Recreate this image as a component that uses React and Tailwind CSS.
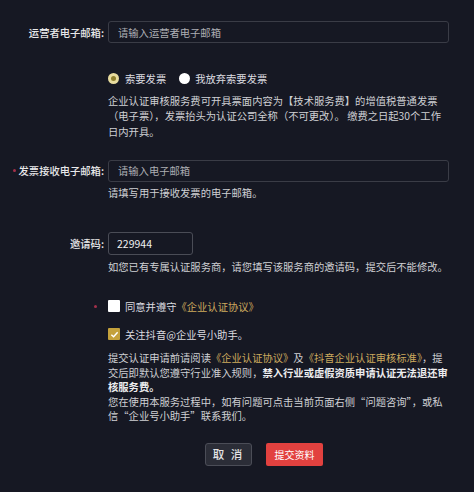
export default function App() {
  const gold = "text-[#cdaa5e]";
  return (
    <div className="w-[474px] h-[492px] overflow-hidden bg-[#161823] text-[10.3px] leading-[15px] text-[#cfd0d4] font-['Noto_Sans_CJK_SC',sans-serif] pt-[21px]">
      {/* 运营者电子邮箱 */}
      <div className="flex items-center h-[22px]">
        <div className="w-[108px] pr-[4px] text-right text-[#e8e8ea] font-medium">运营者电子邮箱:</div>
        <input
          className="w-[341px] h-[22px] border border-[#3a3c46] rounded-[3px] bg-transparent pl-[9px] outline-none text-[#e4e4e6] placeholder:text-[#adaeb3]"
          placeholder="请输入运营者电子邮箱"
        />
      </div>

      {/* radios */}
      <div className="ml-[108px] mt-[28px] flex items-center h-[14px]">
        <span className="w-[11px] h-[11px] rounded-full bg-[#e8dc9e] flex items-center justify-center">
          <span className="w-[5px] h-[5px] rounded-full bg-[#8f802e]" />
        </span>
        <span className="ml-[6px] text-[#dcdce0]">索要发票</span>
        <span className="ml-[13px] w-[11px] h-[11px] rounded-full bg-white" />
        <span className="ml-[5px] text-[#dcdce0]">我放弃索要发票</span>
      </div>

      {/* description */}
      <div className="ml-[108px] mt-[8px] leading-[15.3px] whitespace-nowrap">
        <div>企业认证审核服务费可开具票面内容为【技术服务费】的增值税普通发票</div>
        <div>（电子票），发票抬头为认证公司全称（不可更改）。 缴费之日起30个工作</div>
        <div>日内开具。</div>
      </div>

      {/* 发票接收电子邮箱 */}
      <div className="flex items-center h-[22px] mt-[21px]">
        <div className="w-[108px] pr-[4px] flex items-center justify-end text-[#e8e8ea] font-medium">
          <span className="w-[3px] h-[3px] rounded-full bg-[#a3304a] mr-[3px]" />
          <span>发票接收电子邮箱:</span>
        </div>
        <input
          className="w-[341px] h-[22px] border border-[#3a3c46] rounded-[3px] bg-transparent pl-[9px] outline-none text-[#e4e4e6] placeholder:text-[#adaeb3]"
          placeholder="请输入电子邮箱"
        />
      </div>
      <div className="ml-[108px] mt-[3.5px]">请填写用于接收发票的电子邮箱。</div>

      {/* 邀请码 */}
      <div className="flex items-center h-[23px] mt-[31.5px]">
        <div className="w-[108px] pr-[4px] text-right text-[#e8e8ea] font-medium">邀请码:</div>
        <input
          className="w-[85px] h-[23px] border border-[#4a4c56] rounded-[3px] bg-transparent pl-[8px] outline-none text-[#f0f0f2] text-[10.5px]"
          defaultValue="229944"
        />
      </div>
      <div className="ml-[108px] mt-[4px] whitespace-nowrap">如您已有专属认证服务商，请您填写该服务商的邀请码，提交后不能修改。</div>

      {/* agree */}
      <div className="flex items-center h-[14px] mt-[25.5px]">
        <div className="w-[108px] flex justify-end pr-[11px]">
          <span className="w-[3px] h-[3px] rounded-full bg-[#a3304a]" />
        </div>
        <span className="w-[12px] h-[12px] bg-white rounded-[1px]" />
        <span className="ml-[5px] text-[#dcdce0]">
          同意并遵守<span className={gold}>《企业认证协议》</span>
        </span>
      </div>

      {/* follow */}
      <div className="flex items-center h-[14px] mt-[14px] ml-[108px]">
        <span className="w-[12px] h-[12px] bg-[#c4a13c] rounded-[1px] flex items-center justify-center">
          <svg width="9" height="9" viewBox="0 0 10 10">
            <polyline points="1.5,5.2 4,7.5 8.5,2.5" fill="none" stroke="#fff" strokeWidth="1.6" />
          </svg>
        </span>
        <span className="ml-[5px] text-[#dcdce0]">关注抖音@企业号小助手。</span>
      </div>

      {/* paragraph */}
      <div className="ml-[108px] mt-[10px] leading-[14.5px] whitespace-nowrap">
        <div>
          提交认证申请前请阅读<span className={gold}>《企业认证协议》</span>及<span className={gold}>《抖音企业认证审核标准》</span>，提
        </div>
        <div>
          交后即默认您遵守行业准入规则，<span className="font-bold text-[#ececee]">禁入行业或虚假资质申请认证无法退还审</span>
        </div>
        <div>
          <span className="font-bold text-[#ececee]">核服务费。</span>
        </div>
        <div>您在使用本服务过程中，如有问题可点击当前页面右侧“问题咨询”，或私</div>
        <div>信“企业号小助手”联系我们。</div>
      </div>

      {/* buttons */}
      <div className="flex mt-[19px] ml-[205px]">
        <button className="w-[47px] h-[23px] border border-[#4b4d57] bg-[#2b2d37] rounded-[3px] text-[11.5px] font-medium text-[#e4e4e6] tracking-[2px]">取 消</button>
        <button className="ml-[14px] w-[57px] h-[23px] bg-[#e2413f] rounded-[2px] text-[10px] text-white">提交资料</button>
      </div>
    </div>
  );
}
